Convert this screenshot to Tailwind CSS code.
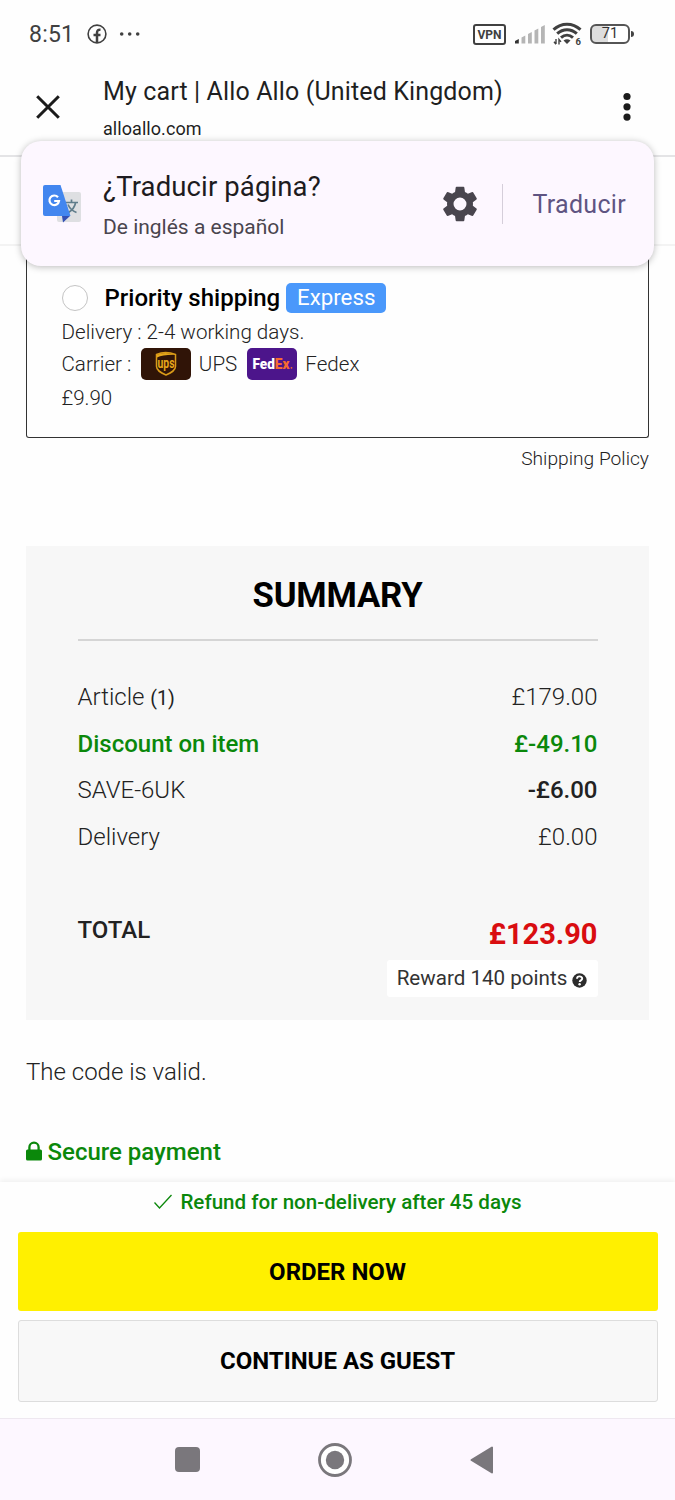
<!DOCTYPE html>
<html lang="en">
<head>
<meta charset="utf-8">
<title>My cart | Allo Allo (United Kingdom)</title>
<script src="https://cdn.jsdelivr.net/npm/@tailwindcss/browser@4"></script>
</head>
<body class="bg-[#fefefe] font-['Roboto',sans-serif] text-[#222]">
<div class="relative w-[675px] h-[1500px] overflow-hidden flex flex-col whitespace-nowrap">

  <!-- Status bar -->
  <div class="h-[68px] shrink-0 flex items-center pl-[29px] pr-[41px] text-[#404040]">
    <span class="text-[23px] leading-7 tracking-[0.2px] pt-[2px]">8:51</span>
    <svg class="ml-[13px]" width="20" height="20" viewBox="0 0 20 20"><circle cx="10" cy="10" r="8.9" fill="none" stroke="#404040" stroke-width="1.6"/><path d="M10 18.5V8.8c0-2.2 1-3.3 3.5-3.1M6.5 11h7" fill="none" stroke="#404040" stroke-width="2.5"/></svg>
    <svg class="ml-3" width="22" height="6" viewBox="0 0 22 6" fill="#404040"><circle cx="2.7" cy="3" r="1.8"/><circle cx="10.7" cy="3" r="1.8"/><circle cx="18.7" cy="3" r="1.8"/></svg>
    <div class="ml-auto flex items-center">
      <span class="w-[33px] h-[21px] border-2 border-[#404040] rounded-[3px] flex items-center justify-center text-[12px] pt-px font-bold leading-none">VPN</span>
      <svg class="ml-[9px]" width="30" height="20" viewBox="0 0 30 20"><path d="M0 19.5V17l3.8-2v4.5z" fill="#333"/><path d="M6.5 19.5v-6l3.8-2v8zM13 19.5v-9.5l3.8-2v11.500zM19.500 19.500V6.500l3.800-2v15zM26 19.500V3l3.800-2v18.500z" fill="#b5b5b5"/></svg>
      <svg class="ml-[7px]" width="30" height="24" viewBox="0 0 30 24"><g fill="none" stroke="#404040" stroke-width="3"><path d="M1.500 7.700C9.500.300 20.500.300 28.500 7.700"/><path d="M5.200 11.700C11 6.300 19 6.300 24.800 11.700"/><path d="M9 15.600C12.700 12.300 17.300 12.300 21 15.600"/></g><path d="M11.500 18.500q3.500-2.500 7 0L15 22z" fill="#404040"/><path d="M4 17v5M2 19.800l2 2.400M7 22.500v-5l2 2.400" fill="none" stroke="#404040" stroke-width="1.400"/><text x="23.500" y="22.500" font-size="9.500" font-weight="700" fill="#404040">6</text></svg>
      <span class="ml-2 w-[40px] h-[20px] rounded-[6px] border-2 border-[#555] bg-linear-to-r from-[#ddd] from-45% to-white to-45% flex items-center justify-center text-[14.500px] pt-px leading-none text-[#333]">71</span>
      <span class="ml-px w-[3px] h-[6px] rounded-r bg-[#444]"></span>
    </div>
  </div>

  <!-- Browser toolbar -->
  <div class="h-[89px] shrink-0 border-b-2 border-[#e4e4e6] flex items-start pl-[36px] pr-[43px]">
    <svg class="mt-[27px]" width="24" height="24" viewBox="0 0 24 24"><path d="M1.200 1.200l21.600 21.600M22.800 1.200L1.200 22.800" stroke="#1b1b1b" stroke-width="3"/></svg>
    <div class="ml-[43px] pt-[8px] text-[#1f1f1f]">
      <div class="text-[25px] leading-[32px] tracking-[0.130px]">My cart | Allo Allo (United Kingdom)</div>
      <div class="mt-[10px] text-[18px] leading-[22px] tracking-[0.060px]">alloallo.com</div>
    </div>
    <svg class="ml-auto mt-[24px]" width="10" height="30" viewBox="0 0 10 30" fill="#1b1b1b"><circle cx="5" cy="4.500" r="3.600"/><circle cx="5" cy="14.800" r="3.600"/><circle cx="5" cy="25.100" r="3.600"/></svg>
  </div>
  <div class="h-[89px] shrink-0 border-b-2 border-[#f3f3f3]"></div>

  <!-- Shipping method -->
  <div class="mx-[26px] h-[192px] shrink-0 border border-t-0 border-[#333] rounded-b-[3px] pl-[34.500px] pt-[36px] text-[20.500px] font-light">
    <div class="flex items-center h-[32px]">
      <span class="w-[26px] h-[26px] rounded-full border border-[#c4c4c4] bg-white"></span>
      <span class="ml-[17px] -mt-px text-[24px] font-medium text-black">Priority shipping</span>
      <span class="ml-[6px] w-[100px] h-[30px] rounded-[5px] bg-[#4a98fb] text-white text-[22.300px] font-normal flex items-center justify-center">Express</span>
    </div>
    <div class="h-[34px] leading-[36px] text-[20.600px]">Delivery : 2-4 working days.</div>
    <div class="flex items-center h-[32px] text-[20.600px]">
      <span>Carrier :</span>
      <svg class="ml-[9.500px]" width="50" height="32" viewBox="0 0 50 32"><rect width="50" height="32" rx="5" fill="#301407"/><path d="M15.500 6.500q9-4 19 0v12c0 4-4 6-9.500 8.500-5.500-2.500-9.500-4.500-9.500-8.500z" fill="none" stroke="#d99a18" stroke-width="1.500"/><path d="M16 9.500V6.800q8-3.500 18 0Q22 6.500 16 9.500z" fill="#e5a61a"/><text x="16.500" y="20" font-size="14" font-weight="700" fill="#e5a61a" textLength="17" lengthAdjust="spacingAndGlyphs">ups</text></svg>
      <span class="ml-[8px]">UPS</span>
      <svg class="ml-[10px]" width="50" height="32" viewBox="0 0 50 32"><rect width="50" height="32" rx="5" fill="#4c158b"/><text x="5.500" y="20.500" font-size="15.500" font-weight="900" fill="#fff" textLength="37" lengthAdjust="spacingAndGlyphs">Fed<tspan fill="#f66a30">Ex</tspan></text><circle cx="44.500" cy="19.800" r="0.900" fill="#f66a30"/></svg>
      <span class="ml-[8px]">Fedex</span>
    </div>
    <div class="h-[34px] leading-[37px]">£9.90</div>
  </div>
  <div class="mx-[26px] h-[108px] shrink-0 pt-[8px] text-right text-[19.200px] leading-[26px] font-light">Shipping Policy</div>

  <!-- Summary -->
  <div class="mx-[26px] h-[474px] shrink-0 bg-[#f7f7f7] px-[51.500px] text-[24px] font-light">
    <div class="h-[95px] border-b-2 border-[#d5d5d5] pt-[29px] text-center text-[34.700px] leading-[40px] font-bold text-black"><span class="tracking-[-0.200px]">SUMMARY</span></div>
    <div class="pt-[33px]">
      <div class="flex justify-between h-[46px] leading-[47px]"><span>Article <span class="text-[19.500px] font-normal">(1)</span></span><span>£179.00</span></div>
      <div class="flex justify-between h-[47px] leading-[48px] font-medium text-[#0b880b]"><span>Discount on item</span><span>£-49.10</span></div>
      <div class="flex justify-between h-[46px] leading-[47px]"><span>SAVE-6UK</span><span class="font-medium">-£6.00</span></div>
      <div class="flex justify-between h-[46px] leading-[48px]"><span>Delivery</span><span>£0.00</span></div>
    </div>
    <div class="flex justify-between pt-[47px] h-[101px] leading-[48px]"><span class="font-medium">TOTAL</span><span class="pt-[4px] text-[29px] font-bold text-[#d90d10]">£123.90</span></div>
    <div class="ml-auto w-[211px] h-[37px] bg-white rounded-[3px] flex items-center justify-center text-[20.600px] font-normal text-[#333]">Reward 140 points
      <svg class="ml-[5px] mt-[3px]" width="15" height="15" viewBox="0 0 15 15"><circle cx="7.500" cy="7.500" r="7.200" fill="#2c2c2c"/><path d="M5 5.800c0-3.200 5.200-3.100 5.200-.200 0 1.900-2.500 1.700-2.500 3.400" fill="none" stroke="#fff" stroke-width="1.900"/><circle cx="7.600" cy="11.300" r="1.200" fill="#fff"/></svg>
    </div>
  </div>

  <div class="mx-[26px] mt-[36px] shrink-0 text-[24px] leading-[32px] font-light">The code is valid.</div>
  <div class="mx-[25.500px] mt-[48px] h-[46px] shrink-0 flex items-start text-[24px] leading-[32px] font-medium text-[#0b880b]">
    <svg class="mt-[5px] mr-[6px]" width="16" height="20" viewBox="0 0 16 20"><path d="M3.400 10V6.300a4.600 4.600 0 0 1 9.200 0V10" fill="none" stroke="#0b880b" stroke-width="2.300"/><rect y="8.500" width="16" height="11" rx="1.500" fill="#0b880b"/></svg>Secure payment
  </div>

  <!-- Sticky checkout actions -->
  <div class="h-[236px] shrink-0 bg-[#fefefe] px-[17.500px] shadow-[0_-2px_5px_rgba(0,0,0,0.060)]">
    <div class="h-[50px] flex items-start justify-center pt-[5px] text-[20.600px] leading-[30px] font-medium text-[#0b880b]">
      <svg class="mt-[6px] mr-[7px]" width="20" height="17" viewBox="0 0 19 17"><path d="M1 9.500l5 5.500L18 2" fill="none" stroke="#0b880b" stroke-width="1.300"/></svg>Refund for non-delivery after 45 days
    </div>
    <div class="h-[79px] bg-[#fff000] rounded-[3px] flex items-center justify-center text-[24px] font-bold text-black">ORDER NOW</div>
    <div class="mt-[9px] h-[82px] bg-[#f8f8f8] border border-[#ddd] rounded-[3px] flex items-center justify-center text-[24px] font-bold text-black">CONTINUE AS GUEST</div>
  </div>

  <!-- Navigation bar -->
  <div class="grow bg-[#fdf7ff] border-t border-[#eee8f0] flex items-center pl-[175px]">
    <span class="w-[25px] h-[25px] rounded-[4px] bg-[#7a777c]"></span>
    <svg class="ml-[118px]" width="34" height="34" viewBox="0 0 34 34"><circle cx="17" cy="17" r="15.500" fill="#fff" stroke="#7a777c" stroke-width="2.800"/><circle cx="17" cy="17" r="9.200" fill="#7a777c"/></svg>
    <svg class="ml-[118px]" width="24" height="30" viewBox="0 0 24 30"><path d="M22 2.500v25L1.500 15z" fill="#7a777c" stroke="#7a777c" stroke-width="2" stroke-linejoin="round"/></svg>
  </div>

  <!-- Translate prompt -->
  <div class="absolute left-[21px] top-[141px] w-[633px] h-[125px] rounded-[20px] bg-[#fdf7ff] shadow-[0_1px_7px_rgba(0,0,0,0.270)] flex items-center pl-[22px] pr-[28px]">
    <svg class="mt-[1px]" width="38" height="38" viewBox="0 0 38 38"><rect x="14" y="7" width="24" height="30" rx="2" fill="#dedfe2"/><path d="M19 31h8l-7 6.500z" fill="#3450b4"/><path d="M23 17.500h12M28.500 14.500v3M32.500 18c-1 5-4.500 8-7 9.500M25 19.500c1.500 3.500 4.500 6.500 8.500 8" fill="none" stroke="#607d8b" stroke-width="1.700"/><path d="M2 0h15.500l10 31H2a2 2 0 0 1-2-2V2a2 2 0 0 1 2-2z" fill="#4286ef"/><path d="M15 12.300a4.800 4.800 0 1 0 1 3.700h-4.800" fill="none" stroke="#fff" stroke-width="2.200"/></svg>
    <div class="ml-[22px] pt-[2px]">
      <div class="text-[27.500px] leading-[34px] tracking-[0.120px] text-[#1d1b20]">¿Traducir página?</div>
      <div class="mt-[10px] text-[21px] leading-[26px] text-[#4a454e]">De inglés a español</div>
    </div>
    <svg class="ml-auto" width="36" height="36" viewBox="2 2 20 20" fill="#49454e"><path d="M19.140 12.940c.04-.3.060-.61.060-.94 0-.32-.02-.64-.07-.94l2.030-1.580a.49.49 0 0 0 .12-.61l-1.920-3.320a.488.488 0 0 0-.59-.22l-2.390.96c-.5-.38-1.030-.7-1.620-.94l-.36-2.540a.484.484 0 0 0-.48-.41h-3.840c-.24 0-.43.17-.47.41l-.36 2.540c-.59.24-1.130.57-1.620.94l-2.390-.96a.48.48 0 0 0-.59.220L2.740 8.870c-.12.210-.08.470.12.610l2.030 1.580c-.05.3-.09.630-.09.940s.02.640.07.940l-2.030 1.580a.49.49 0 0 0-.12.610l1.920 3.320c.12.220.37.290.59.220l2.390-.96c.5.380 1.030.7 1.620.94l.36 2.540c.05.240.24.410.48.410h3.840c.24 0 .44-.17.47-.41l.36-2.540c.59-.24 1.130-.56 1.620-.94l2.390.96c.22.080.47 0 .59-.22l1.920-3.320a.47.47 0 0 0-.12-.61zM12 15.600A3.600 3.600 0 1 1 12 8.400a3.600 3.600 0 0 1 0 7.200z"/></svg>
    <span class="ml-[24px] w-px h-[40px] bg-[#d5ceda]"></span>
    <span class="ml-[29px] pt-[2px] text-[25px] font-[450] tracking-[0.300px] text-[#5f5482]">Traducir</span>
  </div>
</div>
</body>
</html>
